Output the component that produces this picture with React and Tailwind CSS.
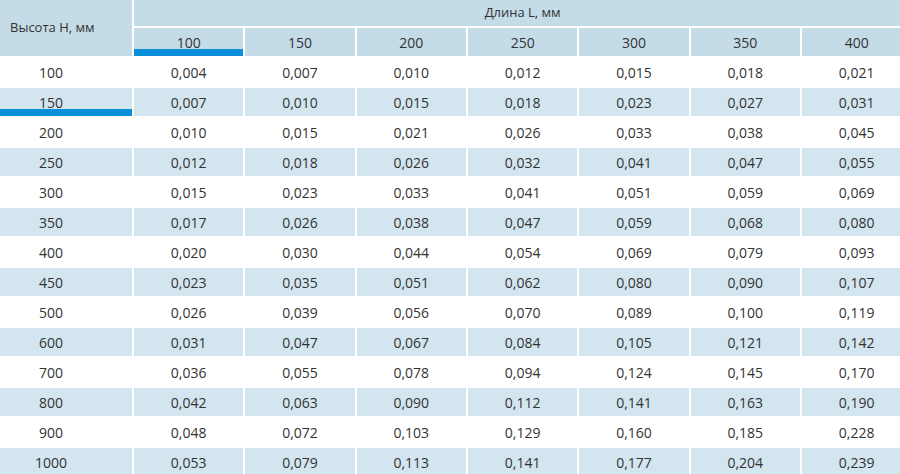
const lengths = [100, 150, 200, 250, 300, 350, 400];

const rows = [
  ['100', '0,004', '0,007', '0,010', '0,012', '0,015', '0,018', '0,021'],
  ['150', '0,007', '0,010', '0,015', '0,018', '0,023', '0,027', '0,031'],
  ['200', '0,010', '0,015', '0,021', '0,026', '0,033', '0,038', '0,045'],
  ['250', '0,012', '0,018', '0,026', '0,032', '0,041', '0,047', '0,055'],
  ['300', '0,015', '0,023', '0,033', '0,041', '0,051', '0,059', '0,069'],
  ['350', '0,017', '0,026', '0,038', '0,047', '0,059', '0,068', '0,080'],
  ['400', '0,020', '0,030', '0,044', '0,054', '0,069', '0,079', '0,093'],
  ['450', '0,023', '0,035', '0,051', '0,062', '0,080', '0,090', '0,107'],
  ['500', '0,026', '0,039', '0,056', '0,070', '0,089', '0,100', '0,119'],
  ['600', '0,031', '0,047', '0,067', '0,084', '0,105', '0,121', '0,142'],
  ['700', '0,036', '0,055', '0,078', '0,094', '0,124', '0,145', '0,170'],
  ['800', '0,042', '0,063', '0,090', '0,112', '0,141', '0,163', '0,190'],
  ['900', '0,048', '0,072', '0,103', '0,129', '0,160', '0,185', '0,228'],
  ['1000', '0,053', '0,079', '0,113', '0,141', '0,177', '0,204', '0,239'],
];

// selected cell (row/column highlight bars)
const activeLength = 100;
const activeHeight = '150';

export default function App() {
  return (
    <div className="w-[900px] h-[474px] overflow-hidden bg-white text-[#333] font-['Open_Sans',sans-serif]">
      <div className="grid grid-cols-[132px_repeat(7,109.33px)] gap-[2px] w-max">
        <div className="row-span-2 relative bg-[#c4dbe8] flex items-center pl-[10px] text-[13px] h-[56px]">
          Высота Н, мм
        </div>
        <div className="col-span-7 bg-[#c4dbe8] h-[26px] flex items-center justify-center text-[13px]">
          Длина L, мм
        </div>
        {lengths.map((l) => (
          <div key={l} className="relative bg-[#c4dbe8] h-[28px] flex items-center justify-center text-[14px]">
            {l}
            {l === activeLength && <span className="absolute left-0 right-0 bottom-0 h-[7px] bg-[#0a90da]" />}
          </div>
        ))}

        {rows.map((r, i) => {
          const striped = i % 2 === 1;
          return r.map((v, j) => (
            <div
              key={i + '-' + j}
              className={
                'relative h-[28px] flex items-center justify-center text-[14px] ' +
                (j === 0 ? 'pr-[30px] ' : '') +
                (striped ? 'bg-[#d3e5ef]' : 'bg-white')
              }
            >
              {v}
              {j === 0 && v === activeHeight && <span className="absolute left-0 right-0 bottom-0 h-[7px] bg-[#0a90da]" />}
            </div>
          ));
        })}
      </div>
    </div>
  );
}
